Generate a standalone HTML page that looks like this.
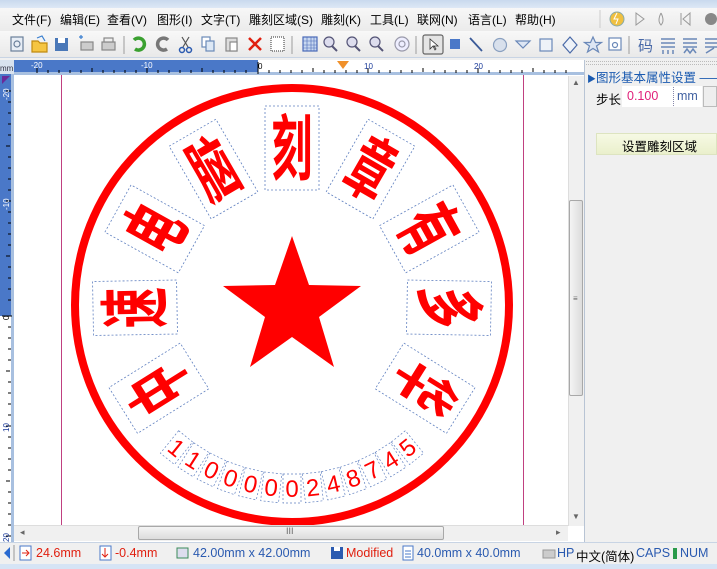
<!DOCTYPE html>
<html><head><meta charset="utf-8"><style>
*{margin:0;padding:0;box-sizing:border-box}
body{width:717px;height:569px;overflow:hidden;background:#f0f0f0;font-family:"Liberation Sans","Noto Sans CJK SC",sans-serif;position:relative;font-size:12px}
.abs{position:absolute}
.menu span{position:absolute;top:11px;font-size:12px;color:#000;white-space:nowrap}
.st{position:absolute;top:546px;font-size:12.5px;white-space:nowrap}
</style></head><body>
<div class="abs" style="left:0;top:0;width:717px;height:8px;background:linear-gradient(#c9d9ee,#dde8f5)"></div>
<div class="abs" style="left:0;top:8px;width:717px;height:23px;background:linear-gradient(#f7f7f7,#ebebeb)"></div>
<div class="menu">
<span style="left:12px">文件(F)</span><span style="left:60px">编辑(E)</span><span style="left:107px">查看(V)</span><span style="left:157px">图形(I)</span><span style="left:201px">文字(T)</span><span style="left:249px">雕刻区域(S)</span><span style="left:321px">雕刻(K)</span><span style="left:370px">工具(L)</span><span style="left:417px">联网(N)</span><span style="left:468px">语言(L)</span><span style="left:515px">帮助(H)</span>
</div>
<div class="abs" style="left:0;top:31px;width:717px;height:27px;background:linear-gradient(#f8f8f8,#e9e9e9);border-bottom:1px solid #c8d4e4"></div>
<svg class="abs" style="left:0;top:0" width="717" height="60">
<circle cx="617" cy="19" r="7" fill="#f0c040" stroke="#8aa" /><path d="M617 13 l-3 6 h4 l-2 5" stroke="#fff" fill="none"/>
<path d="M636 13 l8 6 l-8 6z" fill="none" stroke="#999"/>
<path d="M661 13 q-4 8 0 12 q4-4 0-12" fill="none" stroke="#999"/>
<path d="M681 13 v12 M690 13 l-7 6 l7 6z" fill="none" stroke="#999"/>
<circle cx="711" cy="19" r="6" fill="#888"/>
<line x1="600" y1="10" x2="600" y2="28" stroke="#ccc"/>
<g stroke-width="1.2">
<rect x="11" y="37" width="12" height="14" fill="#e8eef6" stroke="#6a7f9a"/><circle cx="17" cy="44" r="3" fill="none" stroke="#6a7f9a"/>
<path d="M32 41 h6 l2 2 h7 v9 h-15z" fill="#f5c542" stroke="#c08a10"/><path d="M37 38 l5 -2 l3 5" fill="none" stroke="#3a7fd0"/>
<rect x="55" y="38" width="13" height="13" fill="#4a78b8"/><rect x="58" y="38" width="7" height="5" fill="#fff"/>
<rect x="81" y="42" width="12" height="8" fill="#ccc" stroke="#888"/><path d="M79 37 h4 M81 35 v4" stroke="#3a7fd0"/>
<rect x="102" y="42" width="13" height="8" fill="#ccc" stroke="#888"/><rect x="104" y="38" width="9" height="4" fill="#eee" stroke="#888"/>
<line x1="124" y1="36" x2="124" y2="54" stroke="#aaa"/>
<path d="M134 40 a6 6 0 1 1 1 9" fill="none" stroke="#3aa030" stroke-width="3.5"/>
<path d="M168 40 a6 6 0 1 0 -1 9" fill="none" stroke="#777" stroke-width="3.5"/>
<path d="M182 37 l6 10 M189 37 l-6 10" stroke="#555"/><circle cx="182" cy="50" r="2.5" fill="none" stroke="#2a5ab0" stroke-width="1.5"/><circle cx="189" cy="50" r="2.5" fill="none" stroke="#2a5ab0" stroke-width="1.5"/>
<rect x="202" y="37" width="8" height="10" fill="#fff" stroke="#6a8ab8"/><rect x="206" y="41" width="8" height="10" fill="#dde8f5" stroke="#6a8ab8"/>
<rect x="226" y="38" width="11" height="13" fill="#ddd" stroke="#888"/><rect x="230" y="42" width="7" height="9" fill="#fff" stroke="#888"/>
<path d="M249 38 l12 12 M261 38 l-12 12" stroke="#e02010" stroke-width="2.5"/>
<rect x="271" y="37" width="13" height="14" fill="#fff" stroke="#555" stroke-dasharray="1 1"/>
<line x1="292" y1="36" x2="292" y2="54" stroke="#aaa"/>
<rect x="303" y="37" width="14" height="14" fill="#c8d8f0" stroke="#4a6ab8"/><path d="M303 41h14M303 45h14M303 48h14M307 37v14M311 37v14M314 37v14" stroke="#4a6ab8" stroke-width=".6"/>
<circle cx="329" cy="42" r="5" fill="#dde" stroke="#557"/><path d="M332 46l5 5" stroke="#557" stroke-width="2"/>
<circle cx="352" cy="42" r="5" fill="#dde" stroke="#557"/><path d="M355 46l5 5" stroke="#557" stroke-width="2"/>
<circle cx="375" cy="42" r="5" fill="#dde" stroke="#557"/><path d="M378 46l5 5" stroke="#557" stroke-width="2"/>
<circle cx="402" cy="44" r="7" fill="#eef" stroke="#99a"/><circle cx="402" cy="44" r="3" fill="none" stroke="#99a"/>
<line x1="416" y1="36" x2="416" y2="54" stroke="#aaa"/>
<rect x="423" y="35" width="20" height="19" rx="2" fill="#e4e4e4" stroke="#666"/><path d="M430 39 v10 l3-3 l2 4 l1-1 l-2-3 h4z" fill="#fff" stroke="#333" stroke-width=".8"/>
<rect x="450" y="39" width="10" height="10" fill="#4a78c8"/>
<line x1="470" y1="38" x2="482" y2="51" stroke="#3a5a98" stroke-width="1.8"/>
<circle cx="500" cy="45" r="6.5" fill="#d8e0ec" stroke="#8aa0c0"/>
<path d="M516 41 h14 l-7 7z" fill="#dde6f4" stroke="#6a88b8"/>
<rect x="540" y="39" width="12" height="12" fill="#eef2f8" stroke="#6a88b8"/>
<path d="M570 37 l7 8 l-7 8 l-7 -8z" fill="#eef2f8" stroke="#4a6aa8"/>
<path d="M593 37 l2.5 5.5 h6 l-5 3.5 l2 6 l-5.5-3.5 l-5.5 3.5 l2-6 l-5-3.5 h6z" fill="#dde6f4" stroke="#6a88b8"/>
<rect x="609" y="38" width="12" height="12" fill="#fff" stroke="#6a88b8"/><circle cx="615" cy="45" r="2.5" fill="none" stroke="#6a88b8"/>
<line x1="629" y1="36" x2="629" y2="54" stroke="#aaa"/>
</g>
<text x="638" y="51" font-size="15" fill="#4a6aa8" font-family="Noto Sans CJK SC">码</text>
<path d="M661 39h14M661 43h14M661 47h14M663 50v4M668 50v4M673 50v4" stroke="#6a88b8" stroke-width="1.5"/>
<path d="M683 39h14M683 43h14M683 47h14M684 53l3-4l3 4l3-4l3 4" stroke="#6a88b8" stroke-width="1.5" fill="none"/>
<path d="M705 39h12M705 43h12M705 47h12M706 53l8-5" stroke="#6a88b8" stroke-width="1.5" fill="none"/>
</svg>

<div class="abs" style="left:0;top:60px;width:584px;height:482px;background:#fff"></div>
<svg class="abs" style="left:0;top:60px" width="584" height="482">
<rect x="0" y="0" width="14" height="14" fill="#d8e2ee"/>
<text x="0" y="11" font-size="8" fill="#334">mm</text>
<rect x="14" y="0" width="244" height="14" fill="#4a78c8"/>
<rect x="258" y="0" width="326" height="14" fill="#fff"/>
<rect x="14" y="12" width="570" height="3" fill="#a8c0e0"/>
<rect x="0" y="14" width="14" height="242" fill="#4a78c8"/>
<rect x="0" y="256" width="14" height="226" fill="#fff"/>
<rect x="11" y="14" width="3" height="468" fill="#a8c0e0"/>
<path d="M2 16 l8 0 l-8 8z" fill="#6a2a9a"/>
<g stroke="#000" stroke-width="1">
<path d="M37 8v5M48 10v3M59 10v3M70 10v3M81 10v3M92 8v4M103 10v3M114 10v3M125 10v3M136 10v3M147 8v5M158 10v3M169 10v3M180 10v3M191 10v3M202 8v4M213 10v3M224 10v3M235 10v3M246 10v3M258 2v12M269 10v3M280 10v3M291 10v3M302 10v3M313 8v4M324 10v3M335 10v3M346 10v3M357 10v3M368 8v5M379 10v3M390 10v3M401 10v3M412 10v3M423 8v4M434 10v3M445 10v3M456 10v3M467 10v3M478 8v5M489 10v3M500 10v3M511 10v3M522 10v3M533 8v4M544 10v3M555 10v3M566 10v3"/>
<path d="M6 31h5M8 42h3M8 53h3M8 64h3M8 75h3M6 86h4M8 97h3M8 108h3M8 119h3M8 130h3M6 141h5M8 152h3M8 163h3M8 174h3M8 185h3M6 196h4M8 207h3M8 218h3M8 229h3M8 240h3M2 256h10M8 267h3M8 278h3M8 289h3M8 300h3M6 311h4M8 322h3M8 333h3M8 344h3M8 355h3M6 366h5M8 377h3M8 388h3M8 399h3M8 410h3M6 421h4M8 432h3M8 443h3M8 454h3M8 465h3M6 476h5"/>
</g>
<g font-size="8" font-family="Liberation Sans">
<text x="31" y="8" fill="#fff">-20</text><text x="141" y="8" fill="#fff">-10</text><text x="258" y="9" fill="#000">0</text><text x="364" y="9" fill="#1a3a9a">10</text><text x="474" y="9" fill="#1a3a9a">20</text>
<text transform="translate(9,40) rotate(-90)" fill="#fff">-20</text><text transform="translate(9,150) rotate(-90)" fill="#fff">-10</text><text transform="translate(9,260) rotate(-90)" fill="#000">0</text><text transform="translate(9,372) rotate(-90)" fill="#1a3a9a">10</text><text transform="translate(9,482) rotate(-90)" fill="#1a3a9a">20</text>
</g>
<path d="M337 1 h12 l-6 8z" fill="#f0902a"/>
<line x1="61.5" y1="15" x2="61.5" y2="466" stroke="#c04080"/>
<line x1="523.5" y1="15" x2="523.5" y2="466" stroke="#c04080"/>
</svg>

<svg class="abs" style="left:0;top:0" width="584" height="540">
<circle cx="292" cy="305" r="217" fill="none" stroke="#ff0000" stroke-width="8"/>
<path d="M292 233 L309 282 L361 283 L319 314 L334 364 L292 334 L250 364 L265 314 L223 283 L275 282Z" fill="#ff0000" transform="translate(0,3)"/>
<g font-family="Noto Sans CJK SC" font-weight="bold" fill="#ff0000" font-size="62" text-anchor="middle">
<g transform="rotate(-122 292 305)"><rect x="265" y="106" width="54" height="84" fill="none" stroke="#6080c0" stroke-width=".8" stroke-dasharray="2 2"/><text transform="translate(292,174) scale(0.66,1.15)">中</text></g>
<g transform="rotate(-91 292 305)"><rect x="265" y="106" width="54" height="84" fill="none" stroke="#6080c0" stroke-width=".8" stroke-dasharray="2 2"/><text transform="translate(292,174) scale(0.66,1.15)">速</text></g>
<g transform="rotate(-61 292 305)"><rect x="265" y="106" width="54" height="84" fill="none" stroke="#6080c0" stroke-width=".8" stroke-dasharray="2 2"/><text transform="translate(292,174) scale(0.66,1.15)">电</text></g>
<g transform="rotate(-30 292 305)"><rect x="265" y="106" width="54" height="84" fill="none" stroke="#6080c0" stroke-width=".8" stroke-dasharray="2 2"/><text transform="translate(292,174) scale(0.66,1.15)">脑</text></g>
<g transform="rotate(0 292 305)"><rect x="265" y="106" width="54" height="84" fill="none" stroke="#6080c0" stroke-width=".8" stroke-dasharray="2 2"/><text transform="translate(292,174) scale(0.66,1.15)">刻</text></g>
<g transform="rotate(30 292 305)"><rect x="265" y="106" width="54" height="84" fill="none" stroke="#6080c0" stroke-width=".8" stroke-dasharray="2 2"/><text transform="translate(292,174) scale(0.66,1.15)">章</text></g>
<g transform="rotate(61 292 305)"><rect x="265" y="106" width="54" height="84" fill="none" stroke="#6080c0" stroke-width=".8" stroke-dasharray="2 2"/><text transform="translate(292,174) scale(0.66,1.15)">有</text></g>
<g transform="rotate(91 292 305)"><rect x="265" y="106" width="54" height="84" fill="none" stroke="#6080c0" stroke-width=".8" stroke-dasharray="2 2"/><text transform="translate(292,174) scale(0.66,1.15)">多</text></g>
<g transform="rotate(122 292 305)"><rect x="265" y="106" width="54" height="84" fill="none" stroke="#6080c0" stroke-width=".8" stroke-dasharray="2 2"/><text transform="translate(292,174) scale(0.66,1.15)">华</text></g>
</g>
<g font-family="Liberation Sans" fill="#ff0000" font-size="24" text-anchor="middle">
<g transform="rotate(39 292 305)"><rect x="283" y="474" width="18" height="29" fill="none" stroke="#6080c0" stroke-width=".7" stroke-dasharray="2 2"/><text x="292" y="497">1</text></g>
<g transform="rotate(32.5 292 305)"><rect x="283" y="474" width="18" height="29" fill="none" stroke="#6080c0" stroke-width=".7" stroke-dasharray="2 2"/><text x="292" y="497">1</text></g>
<g transform="rotate(26 292 305)"><rect x="283" y="474" width="18" height="29" fill="none" stroke="#6080c0" stroke-width=".7" stroke-dasharray="2 2"/><text x="292" y="497">0</text></g>
<g transform="rotate(19.5 292 305)"><rect x="283" y="474" width="18" height="29" fill="none" stroke="#6080c0" stroke-width=".7" stroke-dasharray="2 2"/><text x="292" y="497">0</text></g>
<g transform="rotate(13 292 305)"><rect x="283" y="474" width="18" height="29" fill="none" stroke="#6080c0" stroke-width=".7" stroke-dasharray="2 2"/><text x="292" y="497">0</text></g>
<g transform="rotate(6.5 292 305)"><rect x="283" y="474" width="18" height="29" fill="none" stroke="#6080c0" stroke-width=".7" stroke-dasharray="2 2"/><text x="292" y="497">0</text></g>
<g transform="rotate(0 292 305)"><rect x="283" y="474" width="18" height="29" fill="none" stroke="#6080c0" stroke-width=".7" stroke-dasharray="2 2"/><text x="292" y="497">0</text></g>
<g transform="rotate(-6.5 292 305)"><rect x="283" y="474" width="18" height="29" fill="none" stroke="#6080c0" stroke-width=".7" stroke-dasharray="2 2"/><text x="292" y="497">2</text></g>
<g transform="rotate(-13 292 305)"><rect x="283" y="474" width="18" height="29" fill="none" stroke="#6080c0" stroke-width=".7" stroke-dasharray="2 2"/><text x="292" y="497">4</text></g>
<g transform="rotate(-19.5 292 305)"><rect x="283" y="474" width="18" height="29" fill="none" stroke="#6080c0" stroke-width=".7" stroke-dasharray="2 2"/><text x="292" y="497">8</text></g>
<g transform="rotate(-26 292 305)"><rect x="283" y="474" width="18" height="29" fill="none" stroke="#6080c0" stroke-width=".7" stroke-dasharray="2 2"/><text x="292" y="497">7</text></g>
<g transform="rotate(-32.5 292 305)"><rect x="283" y="474" width="18" height="29" fill="none" stroke="#6080c0" stroke-width=".7" stroke-dasharray="2 2"/><text x="292" y="497">4</text></g>
<g transform="rotate(-39 292 305)"><rect x="283" y="474" width="18" height="29" fill="none" stroke="#6080c0" stroke-width=".7" stroke-dasharray="2 2"/><text x="292" y="497">5</text></g>
</g>
</svg>

<div class="abs" style="left:568px;top:76px;width:16px;height:450px;background:#f0f0f0;border-left:1px solid #ddd"></div>
<div class="abs" style="left:569px;top:200px;width:14px;height:196px;background:linear-gradient(90deg,#f4f4f4,#dcdcdc);border:1px solid #a8a8a8;border-radius:2px"></div>
<div class="abs" style="left:573px;top:294px;font-size:8px;color:#666">≡</div>
<div class="abs" style="left:572px;top:78px;font-size:8px;color:#666">▲</div>
<div class="abs" style="left:572px;top:512px;font-size:8px;color:#666">▼</div>
<div class="abs" style="left:14px;top:525px;width:554px;height:16px;background:#f0f0f0;border-top:1px solid #ddd"></div>
<div class="abs" style="left:138px;top:526px;width:306px;height:14px;background:linear-gradient(#f4f4f4,#dcdcdc);border:1px solid #a8a8a8;border-radius:2px"></div>
<div class="abs" style="left:286px;top:526px;font-size:9px;color:#666">III</div>
<div class="abs" style="left:20px;top:527px;font-size:9px;color:#666">◂</div>
<div class="abs" style="left:556px;top:527px;font-size:9px;color:#666">▸</div>

<div class="abs" style="left:584px;top:60px;width:133px;height:482px;background:#f0f0f0;border-left:1px solid #b8c4d4"></div>
<div class="abs" style="left:586px;top:61px;width:131px;height:4px;border-top:1px dotted #bbb;border-bottom:1px dotted #bbb"></div>
<div class="abs" style="left:587px;top:67px;font-size:12.5px;color:#1a5ab0;white-space:nowrap"><span style="font-size:9px">▶</span>图形基本属性设置 ——</div>
<div class="abs" style="left:596px;top:89px;font-size:12.5px">步长</div>
<div class="abs" style="left:622px;top:86px;width:80px;height:21px;background:#fff"></div>
<div class="abs" style="left:627px;top:89px;font-size:12.5px;color:#e0207a">0.100</div>
<div class="abs" style="left:673px;top:87px;height:19px;border-left:1px dotted #88a"></div>
<div class="abs" style="left:677px;top:89px;font-size:12.5px;color:#4060a0">mm</div>
<div class="abs" style="left:703px;top:86px;width:14px;height:21px;background:#eee;border:1px solid #bbb"></div>
<div class="abs" style="left:596px;top:133px;width:121px;height:22px;background:linear-gradient(#f6f9e4,#eaf0cc);border:1px solid #dde4c0"></div>
<div class="abs" style="left:622px;top:136px;font-size:12.5px">设置雕刻区域</div>

<div class="abs" style="left:0;top:542px;width:717px;height:22px;background:#f0f0f0;border-top:1px solid #c8d4e4"></div>
<div class="abs" style="left:0;top:564px;width:717px;height:5px;background:#d6e4f5"></div>
<svg class="abs" style="left:0;top:542px" width="717" height="22">
<path d="M10 5 l-6 6 l6 6z" fill="#2a6ad0"/>
<line x1="14" y1="3" x2="14" y2="19" stroke="#999"/>
<rect x="20" y="4" width="11" height="14" fill="#fff" stroke="#4a78c8"/><path d="M22 11h6M26 8l3 3l-3 3" stroke="#e02010" fill="none"/>
<rect x="100" y="4" width="11" height="14" fill="#fff" stroke="#4a78c8"/><path d="M105 6v9M102 12l3 3l3-3" stroke="#e02010" fill="none"/>
<rect x="177" y="6" width="11" height="10" fill="#dde" stroke="#3a8a5a"/>
<rect x="331" y="5" width="12" height="12" fill="#2a5ab0"/><rect x="334" y="5" width="6" height="4" fill="#fff"/>
<rect x="403" y="4" width="10" height="14" fill="#fff" stroke="#4a78c8"/><path d="M405 9h6M405 12h6M405 15h6" stroke="#4a78c8"/>
<rect x="543" y="8" width="12" height="8" fill="#ccc" stroke="#999"/>
<rect x="673" y="6" width="4" height="11" fill="#2a9a4a"/>
</svg>
<div class="st" style="left:36px;color:#e02010">24.6mm</div>
<div class="st" style="left:115px;color:#e02010">-0.4mm</div>
<div class="st" style="left:193px;color:#2a5ab0">42.00mm x 42.00mm</div>
<div class="st" style="left:346px;color:#e02010">Modified</div>
<div class="st" style="left:417px;color:#2a5ab0">40.0mm x 40.0mm</div>
<div class="st" style="left:557px;color:#2a5ab0">HP</div>
<div class="st" style="left:576px;color:#000">中文(简体)</div>
<div class="st" style="left:636px;color:#2a5ab0">CAPS</div>
<div class="st" style="left:680px;color:#2a5ab0">NUM</div>
</body></html>
